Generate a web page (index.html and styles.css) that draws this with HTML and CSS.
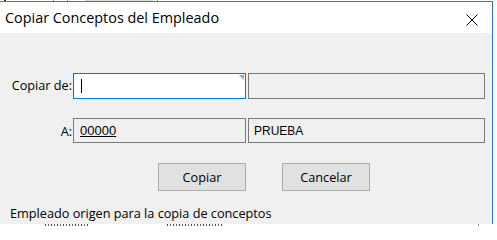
FILE: index.html
```html
<!DOCTYPE html>
<html lang="es">
<head>
<meta charset="utf-8">
<title>Copiar Conceptos del Empleado</title>
<link rel="stylesheet" href="styles.css">
</head>
<body>
<div class="topstrip">
  <span class="frag f1"></span>
  <span class="frag f2"></span>
  <span class="frag f3"></span>
  <span class="frag f4"></span>
  <span class="frag f5"></span>
</div>
<div class="window">
  <div class="titlebar">
    <span class="title">Copiar Conceptos del Empleado</span>
    <svg class="close" width="12" height="12" viewBox="0 0 12 12">
      <path d="M0.5 0.5 L11.5 11.5 M11.5 0.5 L0.5 11.5" stroke="#000" stroke-width="1" fill="none"/>
    </svg>
  </div>
  <div class="content">
    <div class="row row1">
      <label class="lbl">Copiar de:</label>
      <div class="box box-edit">
        <span class="caret"></span>
        <span class="corner"></span>
      </div>
      <div class="box box-ro wide"></div>
    </div>
    <div class="row row2">
      <label class="lbl">A:</label>
      <div class="box box-ro"><span class="code">00000</span></div>
      <div class="box box-ro wide"><span class="name">PRUEBA</span></div>
    </div>
    <div class="buttons">
      <button class="btn">Copiar</button>
      <button class="btn">Cancelar</button>
    </div>
    <div class="status">Empleado origen para la copia de conceptos</div>
  </div>
</div>
<div class="bottomstrip">
  <span class="bt b1"></span>
  <span class="bt b2"></span>
  <span class="bt b3"></span>
</div>
</body>
</html>
```
FILE: styles.css
```css
html, body {
  margin: 0;
  padding: 0;
  background: #ffffff;
}
body {
  width: 497px;
  height: 226px;
  overflow: hidden;
  font-family: "Open Sans", "Noto Sans", sans-serif;
  color: #000;
}
.topstrip {
  height: 1px;
  display: flex;
}
.frag { height: 1px; background: #9a9a9a; }
.f1 { width: 2px; margin-left: 4px; background: #333; }
.f2 { width: 1px; margin-left: 47px; }
.f3 { width: 1px; margin-left: 13px; }
.f4 { width: 68px; margin-left: 17px; background: #d8d8d8; }
.f5 { width: 1px; margin-left: 4px; }

.window {
  width: 492px;
  border-top: 1px solid #2b7bc9;
  border-right: 1px solid #2b7bc9;
}
.titlebar {
  height: 31px;
  background: #fff;
  display: flex;
  align-items: center;
  justify-content: space-between;
}
.title {
  font-size: 14.4px;
  line-height: 31px;
  padding-left: 5px;
  color: #000;
}
.close {
  margin-right: 14px;
  margin-top: 5px;
}
.content {
  height: 191px;
  background: #f0f0f0;
  padding-top: 40px;
  box-sizing: border-box;
  display: flex;
  flex-direction: column;
}
.row {
  display: flex;
  align-items: stretch;
}
.row1 { height: 26px; }
.row2 { height: 25px; margin-top: 19px; }
.lbl {
  width: 73px;
  text-align: right;
  font-size: 12.7px;
  display: flex;
  align-items: center;
  justify-content: flex-end;
  padding-right: 1px;
  box-sizing: border-box;
  white-space: nowrap;
}
.row1 .lbl { padding-bottom: 2px; }
.box {
  width: 173px;
  box-sizing: border-box;
  border: 1px solid #7a7a7a;
  background: #f0f0f0;
  display: flex;
  align-items: center;
  position: relative;
}
.box.wide {
  width: 237px;
  margin-left: 2px;
}
.box-edit {
  background: #fff;
  border-color: #0078d7;
}
.caret {
  width: 1px;
  height: 14px;
  background: #000;
  margin-left: 7px;
}
.corner {
  position: absolute;
  top: 1px;
  right: 1px;
  width: 0;
  height: 0;
  border-top: 5px solid #8fa9c4;
  border-left: 5px solid transparent;
}
.code {
  font-family: "Liberation Sans", Arial, sans-serif;
  font-size: 13px;
  text-decoration: underline;
  margin-left: 6px;
  color: #000;
}
.name {
  font-family: "Liberation Sans", Arial, sans-serif;
  font-size: 12px;
  margin-left: 5px;
  color: #000;
}
.buttons {
  display: flex;
  margin-top: 20px;
  padding-left: 158px;
  gap: 36px;
}
.btn {
  width: 88px;
  height: 28px;
  box-sizing: border-box;
  border: 1px solid #adadad;
  background: #e1e1e1;
  font-family: "Open Sans", "Noto Sans", sans-serif;
  font-size: 12.7px;
  color: #000;
  padding: 0;
  margin: 0;
}
.status {
  margin-top: 14px;
  padding-left: 10px;
  font-size: 12.7px;
  line-height: 17px;
  white-space: nowrap;
}
.bottomstrip {
  height: 2px;
  overflow: hidden;
  display: flex;
}
.bt {
  display: block;
  height: 2px;
  background: repeating-linear-gradient(90deg, #444 0 1px, transparent 1px 3px, #666 3px 4px, transparent 4px 6px);
}
.b1 { margin-left: 45px; width: 45px; }
.b2 { margin-left: 77px; width: 56px; }
.b3 { margin-left: 255px; width: 1px; background: #888; }
```
